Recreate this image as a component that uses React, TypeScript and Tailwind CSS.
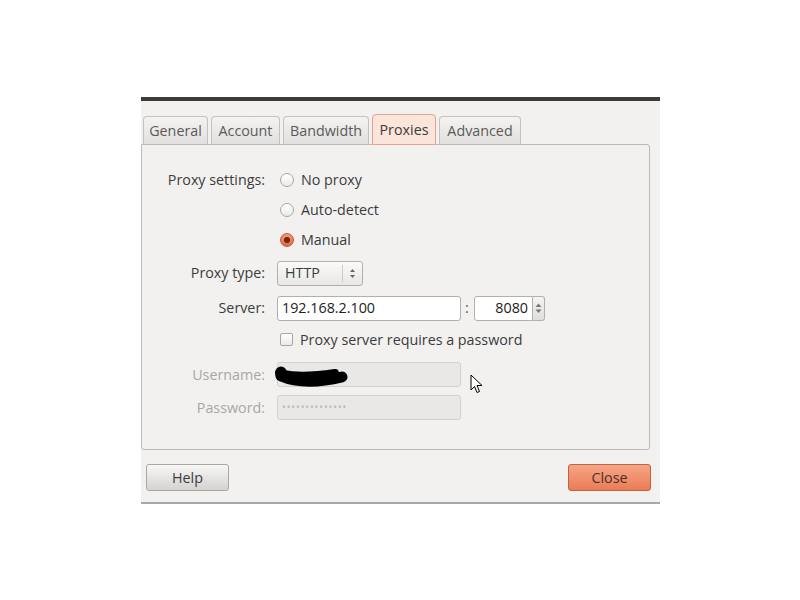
import React from "react";

const font = { fontFamily: '"Open Sans", "Noto Sans", "DejaVu Sans", sans-serif' };

function Tab({ label, w, selected }: { label: string; w: number; selected?: boolean }) {
  if (selected) {
    return (
      <div
        className="h-[31px] flex items-center justify-center rounded-t-[4px] border border-[#e0a58e] bg-[#fbe4da] text-[14.3px] text-[#3c3c3c] -mb-px relative z-10"
        style={{ width: w }}
      >
        {label}
      </div>
    );
  }
  return (
    <div
      className="h-[28px] flex items-center justify-center rounded-t-[4px] border border-b-0 border-[#c4c1be] bg-gradient-to-b from-[#f4f3f2] to-[#e2e0de] text-[14.3px] text-[#5a5a5a]"
      style={{ width: w }}
    >
      {label}
    </div>
  );
}

function Radio({ checked }: { checked?: boolean }) {
  return checked ? (
    <div className="w-[14px] h-[14px] rounded-full border border-[#c65a35] bg-gradient-to-b from-[#f39a78] to-[#e2683f] flex items-center justify-center">
      <div className="w-[6px] h-[6px] rounded-full bg-[#6e2812]" />
    </div>
  ) : (
    <div className="w-[14px] h-[14px] rounded-full border border-[#a9a6a2] bg-gradient-to-b from-[#ffffff] to-[#eceae8]" />
  );
}

export default function App() {
  return (
    <div className="w-[800px] h-[600px] bg-white overflow-hidden relative" style={font}>
      <div className="ml-[141px] pt-[97px] w-[519px]">
        <div className="h-[4px] bg-[#3c3b37]" />
        <div className="bg-[#f2f1f0] pt-[12px] pb-[11px] border-b-2 border-[#a9a8a6]">
          {/* tabs */}
          <div className="flex items-end gap-[3px] pl-[2px] h-[31px]">
            <Tab label="General" w={65} />
            <Tab label="Account" w={69} />
            <Tab label="Bandwidth" w={86} />
            <Tab label="Proxies" w={64} selected />
            <Tab label="Advanced" w={82} />
          </div>
          {/* panel */}
          <div className="w-[509px] h-[306px] border border-[#bdbab6] rounded-[3px] rounded-tl-none pt-[20px] text-[14.3px] text-[#3c3c3c]">
            <div className="flex items-center h-[30px]">
              <div className="w-[123px] text-right">Proxy settings:</div>
              <div className="ml-[15px] flex items-center gap-[7px]">
                <Radio />
                <span>No proxy</span>
              </div>
            </div>
            <div className="flex items-center h-[30px]">
              <div className="w-[123px]" />
              <div className="ml-[15px] flex items-center gap-[7px]">
                <Radio />
                <span>Auto-detect</span>
              </div>
            </div>
            <div className="flex items-center h-[30px]">
              <div className="w-[123px]" />
              <div className="ml-[15px] flex items-center gap-[7px]">
                <Radio checked />
                <span>Manual</span>
              </div>
            </div>
            <div className="flex items-center h-[36px]">
              <div className="w-[123px] text-right">Proxy type:</div>
              <div className="ml-[12px] w-[86px] h-[25px] border border-[#b3b0ac] rounded-[3px] bg-gradient-to-b from-[#fafaf9] to-[#e9e7e5] flex items-center">
                <span className="pl-[7px] flex-1">HTTP</span>
                <div className="w-px h-[17px] bg-[#cfccc9]" />
                <div className="w-[19px] flex justify-center">
                  <svg width="7" height="11" viewBox="0 0 7 11">
                    <path d="M3.5 1 L6 4 L1 4 Z" fill="#666" />
                    <path d="M3.5 10 L6 7 L1 7 Z" fill="#666" />
                  </svg>
                </div>
              </div>
            </div>
            <div className="flex items-center h-[34px]">
              <div className="w-[123px] text-right">Server:</div>
              <div className="ml-[12px] w-[184px] h-[25px] border border-[#b3b0ac] rounded-[3px] bg-white flex items-center pl-[4px] text-[#222]">
                192.168.2.100
              </div>
              <span className="ml-[4px] w-[9px] text-[#555]">:</span>
              <div className="flex h-[25px]">
                <div className="w-[59px] h-[25px] border border-[#b3b0ac] rounded-l-[3px] bg-white flex items-center justify-end pr-[4px] text-[#222]">
                  8080
                </div>
                <div className="w-[12px] h-[25px] border border-l-0 border-[#b3b0ac] rounded-r-[3px] bg-gradient-to-b from-[#f4f3f2] to-[#e1dfdd] flex flex-col items-center justify-center">
                  <svg width="7" height="14" viewBox="0 0 7 14">
                    <path d="M3.5 2.5 L6.5 6 L0.5 6 Z" fill="#777" />
                    <path d="M3.5 12 L6.5 8.5 L0.5 8.5 Z" fill="#777" />
                  </svg>
                </div>
              </div>
            </div>
            <div className="flex items-center h-[29px]">
              <div className="w-[123px]" />
              <div className="ml-[15px] flex items-center gap-[7px]">
                <div className="w-[13px] h-[13px] rounded-[2px] border border-[#a9a6a2] bg-gradient-to-b from-white to-[#eceae8]" />
                <span>Proxy server requires a password</span>
              </div>
            </div>
            <div className="flex items-center h-[41px] text-[#a9a7a4]">
              <div className="w-[123px] text-right">Username:</div>
              <div className="ml-[12px] w-[184px] h-[25px] border border-[#d3d0cd] rounded-[3px] bg-[#eae8e6] relative">
                <svg className="absolute left-[-5px] top-[2px]" width="80" height="26" viewBox="0 0 80 26">
                  <ellipse cx="8" cy="8" rx="6" ry="6.5" fill="#000" />
                  <path d="M8 11 C22 17 44 18 69 12" stroke="#000" strokeWidth="11" strokeLinecap="round" fill="none" />
                  <path d="M10 9 C24 12 42 11 62 8" stroke="#000" strokeWidth="8" strokeLinecap="round" fill="none" />
                </svg>
              </div>
            </div>
            <div className="flex items-center h-[25px] text-[#a9a7a4]">
              <div className="w-[123px] text-right">Password:</div>
              <div className="ml-[12px] w-[184px] h-[25px] border border-[#d3d0cd] rounded-[3px] bg-[#eae8e6] flex items-center pl-[4px] text-[10px] tracking-[0.9px] text-[#bab8b5]">
                ••••••••••••••
              </div>
            </div>
          </div>
          {/* buttons */}
          <div className="flex justify-between mt-[14px] pl-[5px] pr-[9px]">
            <div className="w-[83px] h-[27px] rounded-[3px] border border-[#a9a7a4] bg-gradient-to-b from-[#f7f7f6] to-[#d5d3d1] flex items-center justify-center text-[14.3px] text-[#3c3c3c]">
              Help
            </div>
            <div className="w-[83px] h-[27px] rounded-[3px] border border-[#c0613f] bg-gradient-to-b from-[#f6a585] to-[#eb7b56] flex items-center justify-center text-[14.3px] text-[#4a3028]">
              Close
            </div>
          </div>
        </div>
      </div>
      {/* mouse cursor */}
      <svg className="absolute left-[470px] top-[374px]" width="14" height="21" viewBox="0 0 14 21">
        <path d="M1 1 L1 16 L4.5 12.5 L7 18.5 L9.5 17.5 L7 11.5 L12 11.5 Z" fill="#fff" stroke="#000" strokeWidth="1" strokeLinejoin="round" />
      </svg>
    </div>
  );
}
